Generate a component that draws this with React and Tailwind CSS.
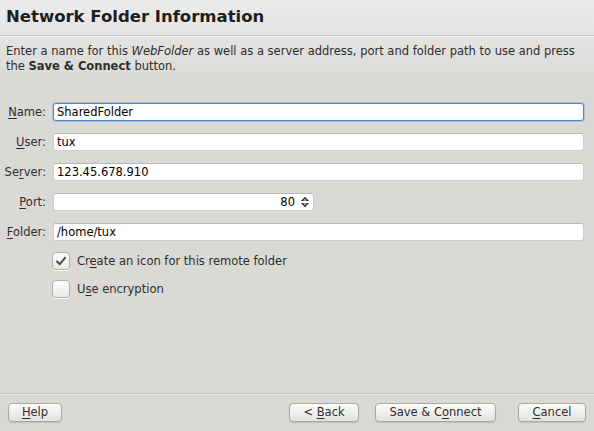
import React, { useState } from "react";

const font = { fontFamily: "'DejaVu Sans', sans-serif" };

const Mn = ({ children }) => <span className="underline underline-offset-2">{children}</span>;

const Field = ({ label, value, focused, children }) => (
    <div className="flex items-center h-[18px]">
        <div className="w-[47px] text-right pr-[1px] text-[#2e2e2e]">{label}</div>
        <div className="ml-[6px] flex-1">
            {children || (
                <div
                    className={`h-[18px] bg-white rounded-[3px] flex items-center px-[3px] ${focused
                        ? "border border-[#4a86c8] shadow-[0_0_0_1px_rgba(90,150,215,0.35)]"
                        : "border border-[#cfcecb] border-t-[#b9b8b5]"
                        }`}
                >
                    {value}
                </div>
            )}
        </div>
    </div>
);

const Check = ({ checked, children }) => (
    <div className="flex items-center gap-[7px] h-[18px]">
        <div className="w-[18px] h-[18px] rounded-[4px] border border-[#b0afab] bg-gradient-to-b from-[#fbfbfb] to-[#ebeae8] flex items-center justify-center shadow-[0_1px_0_rgba(255,255,255,0.8)]">
            {checked && (
                <svg width="12" height="12" viewBox="0 0 12 12">
                    <path d="M2 6.5 L4.8 9.2 L10 2.8" fill="none" stroke="#4a4a4a" strokeWidth="2" strokeLinecap="round" strokeLinejoin="round" />
                </svg>
            )}
        </div>
        <span className="text-[#2e2e2e]">{children}</span>
    </div>
);

const Button = ({ children, className }) => (
    <button
        type="button"
        className={`h-[19px] rounded-[4px] border border-[#a9a8a4] bg-gradient-to-b from-[#fbfbfa] to-[#e3e2df] text-[#2e2e2e] shadow-[0_1px_1px_rgba(0,0,0,0.12)] flex items-center justify-center ${className}`}
    >
        <span className="whitespace-pre">{children}</span>
    </button>
);

export default function App() {
    const [name] = useState("SharedFolder");

    return (
        <div style={font} className="w-[594px] h-[431px] flex flex-col bg-[#dad9d6] text-[11.5px] leading-[15px] overflow-hidden">
            <div className="bg-gradient-to-b from-[#ececec] to-[#e3e3e2]">
                <h1 className="px-[6px] pt-[6px] h-[35px] text-[16.5px] leading-[22px] font-bold text-[#1e1e1e]">
                    Network Folder Information
                </h1>
                <div className="h-[2px] border-t border-[#c3c2bf] bg-[#f2f2f1]" />
            </div>

            <div className="bg-gradient-to-b from-[#e3e3e2] to-[#dad9d6] px-[6px] pt-[7px] pb-[11px] text-[#2e2e2e] flex flex-col">
                <div className="whitespace-nowrap">
                    <span>Enter a name for this </span><i>WebFolder</i><span> as well as a server address, port and folder path to use and press</span>
                </div>
                <div className="whitespace-nowrap">
                    <span>the </span><b>Save &amp; Connect</b><span> button.</span>
                </div>
            </div>

            <div className="flex flex-col gap-[12px] pr-[10px] mt-[18px]">
                <Field label={<><Mn>N</Mn>ame:</>} value={name} focused />
                <Field label={<><Mn>U</Mn>ser:</>} value="tux" />
                <Field label={<>Se<Mn>r</Mn>ver:</>} value="123.45.678.910" />
                <Field label={<><Mn>P</Mn>ort:</>}>
                    <div className="w-[261px] h-[18px] bg-white rounded-[3px] border border-[#cfcecb] border-t-[#b9b8b5] flex items-center justify-end pr-[3px] gap-[5px]">
                        <span>80</span>
                        <svg width="10" height="12" viewBox="0 0 10 12">
                            <path d="M5 0.8 L9 5 H1 Z" fill="#2b2b2b" />
                            <path d="M5 11.2 L9 7 H1 Z" fill="#2b2b2b" />
                            <path d="M5 3 L6.8 4.6 H3.2 Z" fill="#ffffff" />
                            <path d="M5 9 L6.8 7.4 H3.2 Z" fill="#ffffff" />
                        </svg>
                    </div>
                </Field>
                <Field label={<><Mn>F</Mn>older:</>} value="/home/tux" />
            </div>

            <div className="flex flex-col gap-[10px] mt-[11px] ml-[52px]">
                <Check checked>Cr<Mn>e</Mn>ate an icon for this remote folder</Check>
                <Check>U<Mn>s</Mn>e encryption</Check>
            </div>

            <div className="flex-1" />

            <div className="h-[2px] border-t border-[#c3c2bf] bg-[#eeeeed]" />
            <div className="flex items-center px-[8px] pt-[8px] pb-[9px]">
                <Button className="w-[54px]"><Mn>H</Mn>elp</Button>
                <div className="flex-1" />
                <Button className="w-[70px]">&lt; <Mn>B</Mn>ack</Button>
                <Button className="w-[121px] ml-[16px]">Save &amp; C<Mn>o</Mn>nnect</Button>
                <Button className="w-[68px] ml-[22px]"><Mn>C</Mn>ancel</Button>
            </div>
        </div>
    );
}
